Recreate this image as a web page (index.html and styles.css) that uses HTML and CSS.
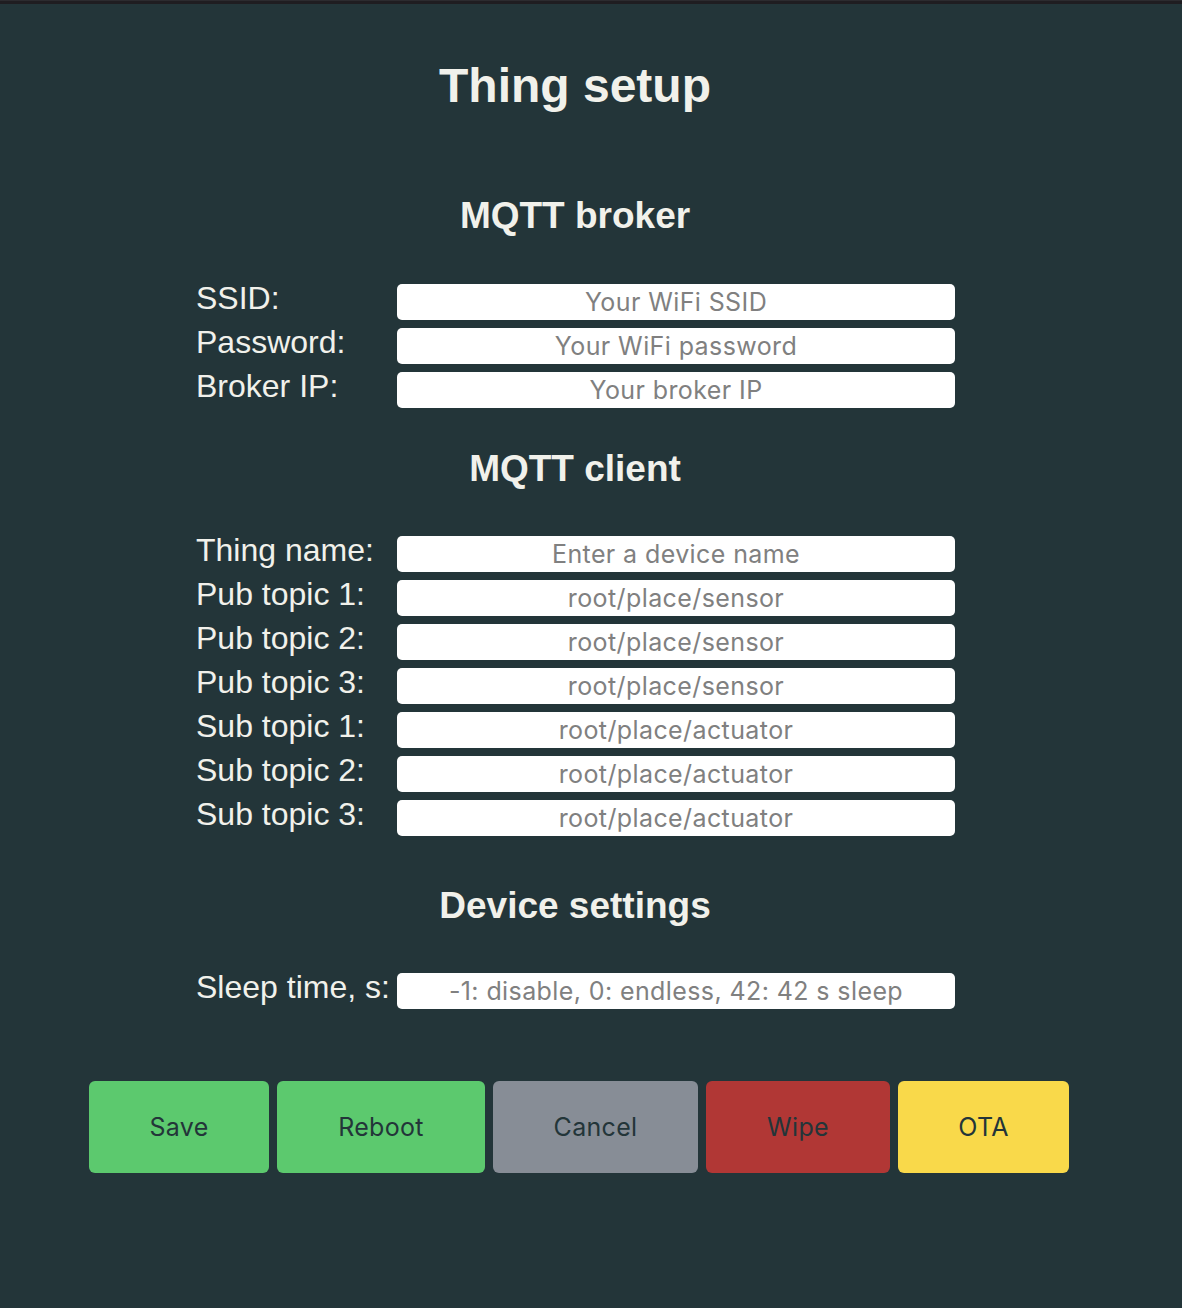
FILE: index.html
```html
<!DOCTYPE html>
<html lang="en">
<head>
<meta charset="utf-8">
<title>Thing setup</title>
<link rel="stylesheet" href="styles.css">
</head>
<body>
<div class="topbar"></div>
<main class="page">
  <h1 class="title">Thing setup</h1>

  <h2 class="section section-broker">MQTT broker</h2>
  <div class="form form-broker">
    <label class="label">SSID:</label>
    <input class="field" type="text" placeholder="Your WiFi SSID">
    <label class="label">Password:</label>
    <input class="field" type="password" placeholder="Your WiFi password">
    <label class="label">Broker IP:</label>
    <input class="field" type="text" placeholder="Your broker IP">
  </div>

  <h2 class="section section-client">MQTT client</h2>
  <div class="form form-client">
    <label class="label">Thing name:</label>
    <input class="field" type="text" placeholder="Enter a device name">
    <label class="label">Pub topic 1:</label>
    <input class="field" type="text" placeholder="root/place/sensor">
    <label class="label">Pub topic 2:</label>
    <input class="field" type="text" placeholder="root/place/sensor">
    <label class="label">Pub topic 3:</label>
    <input class="field" type="text" placeholder="root/place/sensor">
    <label class="label">Sub topic 1:</label>
    <input class="field" type="text" placeholder="root/place/actuator">
    <label class="label">Sub topic 2:</label>
    <input class="field" type="text" placeholder="root/place/actuator">
    <label class="label">Sub topic 3:</label>
    <input class="field" type="text" placeholder="root/place/actuator">
  </div>

  <h2 class="section section-device">Device settings</h2>
  <div class="form form-device">
    <label class="label">Sleep time, s:</label>
    <input class="field" type="text" placeholder="-1: disable, 0: endless, 42: 42 s sleep">
  </div>

  <div class="actions">
    <button class="btn btn-save" type="button">Save</button>
    <button class="btn btn-reboot" type="button">Reboot</button>
    <button class="btn btn-cancel" type="button">Cancel</button>
    <button class="btn btn-wipe" type="button">Wipe</button>
    <button class="btn btn-ota" type="button">OTA</button>
  </div>
</main>
</body>
</html>
```

FILE: styles.css
```css
html, body {
  margin: 0;
  padding: 0;
}

body {
  background: #233539;
  color: #f1f1eb;
  font-family: "Liberation Sans", Arial, sans-serif;
  min-height: 1308px;
}

.topbar {
  height: 4px;
  background: #1f1d21;
  border-top: 1px solid #2c2b2f;
  box-sizing: border-box;
}

.page {
  width: 1150px;
  display: flex;
  flex-direction: column;
}

.title {
  margin: 58px 0 0;
  font-size: 48px;
  line-height: 48px;
  font-weight: 700;
  text-align: center;
}

.section {
  margin: 0;
  font-size: 37px;
  line-height: 37px;
  font-weight: 700;
  text-align: center;
}

.section-broker { margin-top: 87px; }
.section-client { margin-top: 42px; }
.section-device { margin-top: 51px; }

.form {
  display: grid;
  grid-template-columns: 200px 558px;
  grid-auto-rows: 36px;
  row-gap: 8px;
  margin-left: 197px;
}

.form-broker { margin-top: 50px; }
.form-client { margin-top: 49px; }
.form-device { margin-top: 49px; }

.label {
  font-size: 32px;
  line-height: 28px;
  align-self: start;
  white-space: nowrap;
  margin-left: -1px;
}

.field {
  box-sizing: border-box;
  width: 558px;
  height: 36px;
  border: none;
  border-radius: 5px;
  background: #ffffff;
  padding: 0 8px;
  font-family: Inter, "Noto Sans", sans-serif;
  font-size: 25px;
  letter-spacing: 0.4px;
  color: #333;
  text-align: center;
  outline: none;
}

.field::placeholder {
  color: #808080;
  opacity: 1;
}

.actions {
  display: flex;
  gap: 8px;
  margin: 72px 0 0 89px;
}

.btn {
  height: 92px;
  border: none;
  border-radius: 6px;
  padding: 0;
  font-family: Inter, "Noto Sans", sans-serif;
  font-size: 25px;
  letter-spacing: 0.3px;
  color: #233539;
  cursor: pointer;
}

.btn-save { width: 180px; background: #5cc96e; }
.btn-reboot { width: 208px; background: #5cc96e; }
.btn-cancel { width: 205px; background: #878d96; }
.btn-wipe { width: 184px; background: #b13735; }
.btn-ota { width: 171px; background: #f9d94a; }
```
